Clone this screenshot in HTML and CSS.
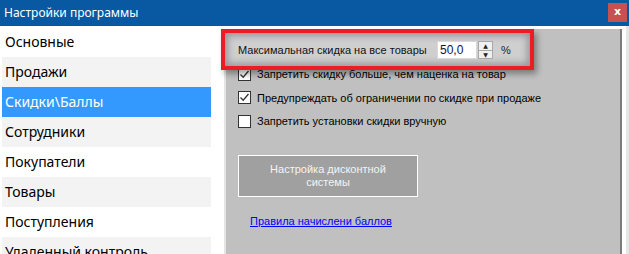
FILE: index.html
```html
<!DOCTYPE html>
<html lang="ru">
  <head>
    <meta charset="UTF-8" />
    <meta name="viewport" content="width=device-width, initial-scale=1.0" />
    <title>Настройки программы</title>
    <link rel="stylesheet" href="styles.css">
  </head>
  <body>
    <div class="window">
      <div class="titlebar">
        <span class="title">Настройки программы</span>
        <span class="close">x</span>
      </div>

      <div class="main">
        <ul class="sidebar">
          <li class="item">Основные</li>
          <li class="item alt">Продажи</li>
          <li class="item active">Скидки\Баллы</li>
          <li class="item alt">Сотрудники</li>
          <li class="item">Покупатели</li>
          <li class="item alt">Товары</li>
          <li class="item">Поступления</li>
          <li class="item alt">Удаленный контроль</li>
        </ul>

        <div class="panel">
          <div class="highlight">
            <span class="field-label">Максимальная скидка на все товары</span>
            <span class="spin">
              <span class="spin-value">50,0</span>
              <span class="spin-buttons">
                <span class="spin-btn">&#9650;</span>
                <span class="spin-btn">&#9660;</span>
              </span>
            </span>
            <span class="unit">%</span>
          </div>

          <div class="checks">
            <label class="check-row">
              <span class="checkbox">
                <svg width="11" height="11" viewBox="0 0 11 11"><polyline points="1.5,5.5 4.2,8.2 9.5,2" fill="none" stroke="#333" stroke-width="1.3"/></svg>
              </span>
              Запретить скидку больше, чем наценка на товар
            </label>
            <label class="check-row">
              <span class="checkbox">
                <svg width="11" height="11" viewBox="0 0 11 11"><polyline points="1.5,5.5 4.2,8.2 9.5,2" fill="none" stroke="#333" stroke-width="1.3"/></svg>
              </span>
              Предупреждать об ограничении по скидке при продаже
            </label>
            <label class="check-row">
              <span class="checkbox"></span>
              Запретить установки скидки вручную
            </label>
          </div>

          <button class="discount-btn" type="button">Настройка дисконтной<br>системы</button>

          <a class="rules-link" href="#">Правила начислени баллов</a>
        </div>
      </div>
    </div>
  </body>
</html>
```

FILE: styles.css
```css
html, body {
  margin: 0;
  padding: 0;
  background: #ffffff;
  overflow: hidden;
}

.window {
  width: 629px;
  height: 254px;
  overflow: hidden;
}

.titlebar {
  height: 26px;
  background-color: #0859a2;
  display: flex;
  align-items: flex-start;
  justify-content: space-between;
  padding: 0 2px 0 4px;
}

.title {
  color: #ffffff;
  font-family: "Noto Sans", sans-serif;
  font-size: 12px;
  line-height: 26px;
}

.close {
  margin-top: 3px;
  width: 19px;
  height: 19px;
  background-color: #c75050;
  color: #ffffff;
  font-family: "DejaVu Sans", sans-serif;
  font-weight: bold;
  font-size: 11px;
  line-height: 17px;
  text-align: center;
}

.main {
  display: flex;
  height: 228px;
}

.sidebar {
  list-style: none;
  margin: 0;
  padding: 1px 0 0 2px;
  width: 209px;
}

.item {
  height: 30px;
  line-height: 30px;
  padding-left: 3px;
  font-family: "Noto Sans", sans-serif;
  font-size: 14px;
  color: #000000;
  white-space: nowrap;
  overflow: hidden;
}

.item.alt {
  background-color: #f3f3f3;
}

.item.active {
  background-color: #3399ff;
  color: #ffffff;
}

.panel {
  margin: 3px 0 0 13px;
  width: 382px;
  padding-left: 12px;
  background-color: #c0c0c0;
  border-left: 2px solid #e4e4e4;
  border-right: 2px solid #7b7b7b;
  font-family: "Liberation Sans", Arial, sans-serif;
  font-size: 11px;
  color: #000000;
}

.main::after {
  content: "";
  width: 4px;
  background: #ffffff;
  border-right: 3px solid #e6e6e6;
}

.highlight {
  position: relative;
  z-index: 1;
  margin-left: -17px;
  width: 292px;
  height: 33px;
  padding-left: 13px;
  border: 4px solid #ec1c24;
  display: flex;
  align-items: center;
  background-color: #cfcfcf;
  box-shadow: inset 0 0 7px 3px #989898, 3px 4px 6px rgba(0, 0, 0, 0.35);
}

.field-label {
  width: 199px;
  white-space: nowrap;
  color: #111111;
}

.spin {
  display: flex;
  height: 18px;
}

.spin-value {
  width: 36px;
  height: 16px;
  background: #ffffff;
  border: 1px solid #d8d8d8;
  padding-left: 2px;
  line-height: 16px;
  font-size: 12px;
  color: #10104a;
  box-sizing: content-box;
}

.spin-buttons {
  display: flex;
  flex-direction: column;
  width: 15px;
  margin-left: 1px;
  background: #f0f0f0;
  border: 1px solid #a8a8a8;
  box-sizing: border-box;
}

.spin-btn {
  height: 8px;
  font-size: 6px;
  line-height: 8px;
  text-align: center;
  color: #222222;
  font-family: "DejaVu Sans", sans-serif;
}

.spin-btn + .spin-btn {
  border-top: 1px solid #a8a8a8;
}

.unit {
  margin-left: 8px;
  color: #222222;
}

.checks {
  margin-top: -2.5px;
  display: flex;
  flex-direction: column;
  gap: 10.5px;
}

.check-row {
  display: flex;
  align-items: center;
  height: 13px;
  white-space: nowrap;
}

.checkbox {
  width: 11px;
  height: 11px;
  background: #ffffff;
  border: 1px solid #333333;
  margin-right: 6px;
  display: flex;
}

.discount-btn {
  display: block;
  margin-top: 27.5px;
  width: 180px;
  height: 42px;
  background-color: #a0a0a0;
  border: 1px solid #ffffff;
  color: #f4f4f4;
  font-family: "Liberation Sans", Arial, sans-serif;
  font-size: 11px;
  line-height: 13px;
  padding: 0;
}

.rules-link {
  display: inline-block;
  margin: 17px 0 0 12px;
  color: #0000ff;
  text-decoration: underline;
  line-height: 14px;
}
```
